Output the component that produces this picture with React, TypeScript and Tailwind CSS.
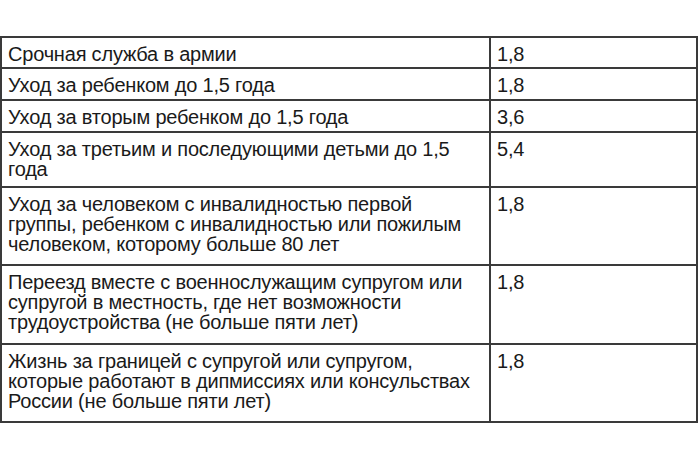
import React from "react";

const rows: { lines: string[]; value: string; h: string }[] = [
  { lines: ["Срочная служба в армии"], value: "1,8", h: "h-[29px]" },
  { lines: ["Уход за ребенком до 1,5 года"], value: "1,8", h: "h-[32px] border-t-2" },
  { lines: ["Уход за вторым ребенком до 1,5 года"], value: "3,6", h: "h-[32px] border-t-2" },
  { lines: ["Уход за третьим и последующими детьми до 1,5", "года"], value: "5,4", h: "h-[55px] border-t-2" },
  {
    lines: [
      "Уход за человеком с инвалидностью первой",
      "группы, ребенком с инвалидностью или пожилым",
      "человеком, которому больше 80 лет",
    ],
    value: "1,8",
    h: "h-[78px] border-t-2",
  },
  {
    lines: [
      "Переезд вместе с военнослужащим супругом или",
      "супругой в местность, где нет возможности",
      "трудоустройства (не больше пяти лет)",
    ],
    value: "1,8",
    h: "h-[79px] border-t-2",
  },
  {
    lines: [
      "Жизнь за границей с супругой или супругом,",
      "которые работают в дипмиссиях или консульствах",
      "России (не больше пяти лет)",
    ],
    value: "1,8",
    h: "h-[78px] border-t-2",
  },
];

export default function App() {
  return (
    <div
      className="w-[700px] h-[465px] bg-white pt-[36px] text-[#1a1a1a]"
      style={{ fontFamily: '"Liberation Sans", Arial, sans-serif' }}
    >
      <div className="w-[698px] border-2 border-[#3a3a3a]">
        {rows.map((r, i) => (
          <div key={i} className={`grid grid-cols-[489px_1fr] border-[#3a3a3a] ${r.h}`}>
            <div className="border-r-2 border-[#3a3a3a] pl-[6px] pt-[6px] text-[20px] leading-[20px] tracking-[-0.2px] whitespace-nowrap overflow-hidden">
              {r.lines.map((l, j) => (
                <div key={j}>{l}</div>
              ))}
            </div>
            <div className="pl-[6px] pt-[6px] text-[20px] leading-[20px] tracking-[-0.2px]">{r.value}</div>
          </div>
        ))}
      </div>
    </div>
  );
}
